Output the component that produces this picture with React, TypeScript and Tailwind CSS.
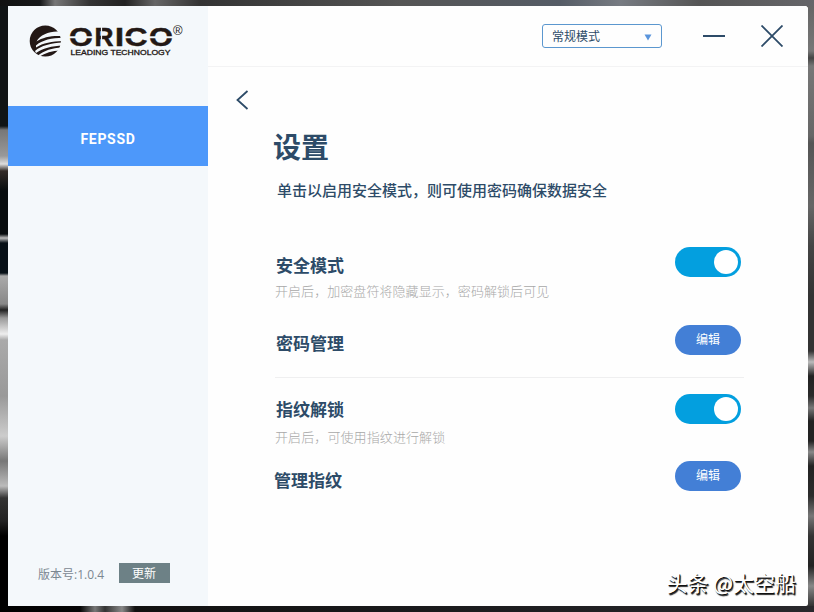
import { useState } from "react";
import clsx from "clsx";

const letters = [
  { char: "O", x: 41, width: 24 },
  { char: "R", x: 66.5, width: 19 },
  { char: "I", x: 87, width: 9 },
  { char: "C", x: 96.5, width: 23 },
  { char: "O", x: 121, width: 24 },
];

function Logo() {
  return (
    <svg width="160" height="34" viewBox="0 0 160 34" aria-label="ORICO">
      <circle cx="17.300" cy="17" r="15.600" fill="#231815" />
      {/* wing feathers */}
      <g fill="#f4f8fb">
        <path d="M8.500 17.500C12 11 21 7.200 30 7.500L34 6L35 12.200C25 11.300 15 13 8.500 17.500Z" />
        <path d="M8 21.500C14 16 24 14 35 13.800L35 17C24 17.200 15 19 8 23.500Z" />
        <path d="M7 27C13 21.500 23 19 35 18.500L35 21.500C24 21.800 14 24.500 8 29Z" />
        <path d="M10 31.500C16 26.500 24 24 34 23.500L32.500 26.500C24 26.800 17 29 11.500 32.500Z" />
      </g>
      {letters.map((letter, i) => (
        <text
          key={i}
          x={letter.x}
          y="22.400"
          fill="#231815"
          stroke="#231815"
          strokeWidth=".5"
          className="font-['Liberation_Sans'] text-[25px] font-bold"
          textLength={letter.width}
          lengthAdjust="spacingAndGlyphs"
        >
          {letter.char}
        </text>
      ))}
      {/* stencil gaps */}
      <path d="M40 13.300H51M55 13.300H67M96 13.300H107M120 13.300H131M135 13.300H147" stroke="#f4f8fb" strokeWidth="2" />
      <path d="M73.500 3V23.500" stroke="#f4f8fb" strokeWidth="1.200" />
      <text x="145" y="10.500" fill="#231815" className="font-['Liberation_Sans'] text-[13px]">
        ®
      </text>
      <text
        x="42.500"
        y="30.700"
        fill="#231815"
        stroke="#231815"
        strokeWidth=".3"
        className="font-['Liberation_Sans'] text-[7px]"
        textLength="100"
        lengthAdjust="spacingAndGlyphs"
      >
        LEADING TECHNOLOGY
      </text>
    </svg>
  );
}

function Toggle() {
  const [on, setOn] = useState(true);

  return (
    <button
      onClick={() => setOn(!on)}
      className={clsx(
        "flex h-[30px] w-[66px] items-center rounded-full px-[3px]",
        on ? "justify-end bg-[#039fdf]" : "justify-start bg-gray-300"
      )}
    >
      <span className="size-6 rounded-full bg-white" />
    </button>
  );
}

function EditButton() {
  return (
    <button className="h-[30px] w-[66px] rounded-full bg-[#437fd6] pb-0.5 text-xs text-white">编辑</button>
  );
}

export default function App() {
  return (
    <div className="h-[612px] w-[814px] overflow-hidden bg-[#161617] font-['Noto_Sans_CJK_SC',sans-serif]">
      {/* Desktop above the window */}
      <div className="h-1.5 bg-[linear-gradient(90deg,#111_0px,#17191a_40px,#777_55px,#333_90px,#222_125px,#666_155px,#333_200px,#555_400px,#555c66_560px,#777b82_620px,#555_700px,#66666a_814px)]" />

      <div className="flex h-[600px]">
        <div className="w-2 bg-[linear-gradient(180deg,#101415_0px,#101415_120px,#777_124px,#999_150px,#ddd_158px,#332c28_165px,#070c0e_185px,#070c0e_228px,#bbb_232px,#071017_237px,#071017_267px,#aaa_270px,#888_298px,#222_304px,#999_312px,#eee_328px,#aaa_334px,#999_390px,#ccc_430px,#777_455px,#bbb_480px,#333_492px,#222_515px,#000_530px)]" />

        <main className="flex w-[800px] overflow-hidden rounded-tr-[2px] rounded-br-[2px] bg-[#fefefe] text-[#2d4b68]">
          <aside className="flex w-[200px] flex-col bg-[#f4f8fb]">
            <div className="h-[100px] pt-[18px] pl-5">
              <Logo />
            </div>
            <div className="flex h-[60px] items-center justify-center bg-[#4d98fa] pt-1.5 font-['Roboto'] text-sm font-bold tracking-[0.7px] text-white">
              FEPSSD
            </div>
            <div className="mt-auto mb-[23px] flex items-center pl-[30px] text-xs text-[#7b8791]">
              <span className="w-[81px] pt-1 font-['Open_Sans','Noto_Sans_CJK_SC']">版本号:1.0.4</span>
              <button className="h-5 w-[51px] bg-[#6d8186] pr-px text-xs leading-5 text-white">更新</button>
            </div>
          </aside>

          <section className="flex w-[600px] flex-col">
            <header className="flex h-[61px] items-center justify-end border-b border-[#f3f3f4] pr-[25px]">
              <button className="flex h-6 w-[120px] items-center justify-between rounded-[3px] border border-[#5b97cf] pr-[9px] pl-[9px] text-xs">
                常规模式
                <svg className="mt-0.5" width="8" height="7" viewBox="0 0 8 7" fill="#5b95dc">
                  <path d="M.5 .5H7.500L4 6.500Z" />
                </svg>
              </button>
              <svg className="ml-[41px]" width="22" height="24" viewBox="0 0 22 24" stroke="#2d4b68" strokeWidth="2">
                <path d="M0 12H22" />
              </svg>
              <svg className="ml-[36px]" width="22" height="22" viewBox="0 0 22 22" stroke="#2d4b68" strokeWidth="1.800">
                <path d="M.5 .5L21.500 21.500M21.500 .5L.5 21.500" />
              </svg>
            </header>

            <div className="pt-[23px] pl-7">
              <svg width="13" height="20" viewBox="0 0 13 20" fill="none" stroke="#2d4b68" strokeWidth="1.800">
                <path d="M11.500 1L1.500 10L11.500 19" />
              </svg>
            </div>

            <h1 className="mt-4 pl-[65px] text-[28px] leading-10 font-bold">设置</h1>
            <p className="mt-[14px] pl-[69px] text-[15px] leading-5 font-medium">
              单击以启用安全模式，则可使用密码确保数据安全
            </p>

            <div className="mt-[47px] ml-[67px] w-[469px]">
              <div className="flex h-[78px] justify-between pr-[3px]">
                <div>
                  <h2 className="mt-1.5 pl-px text-[17px] leading-6 font-bold">安全模式</h2>
                  <p className="mt-1 text-[13px] leading-5 font-light tracking-[0.06px] text-[#a8a8a8]">
                    开启后，加密盘符将隐藏显示，密码解锁后可见
                  </p>
                </div>
                <Toggle />
              </div>
              <div className="flex h-[53px] justify-between border-b border-[#efeff0] pr-[3px]">
                <h2 className="mt-1.5 pl-px text-[17px] leading-6 font-bold">密码管理</h2>
                <EditButton />
              </div>
              <div className="mt-4 flex h-[67px] justify-between pr-[3px]">
                <div>
                  <h2 className="mt-[3px] pl-px text-[17px] leading-6 font-bold">指纹解锁</h2>
                  <p className="mt-1.5 text-[13px] leading-5 font-light tracking-[0.1px] text-[#a8a8a8]">
                    开启后，可使用指纹进行解锁
                  </p>
                </div>
                <Toggle />
              </div>
              <div className="flex justify-between pr-[3px]">
                <h2 className="mt-[7px] -ml-px text-[17px] leading-6 font-bold">管理指纹</h2>
                <EditButton />
              </div>
            </div>

            <div className="mt-auto mb-1.5 pr-3 text-right text-[21px] leading-9 text-white [text-shadow:1px_1px_0_#111,1.5px_1.5px_1px_#222]">
              头条 @太空船
            </div>
          </section>
        </main>

        <div className="w-1.5 bg-[linear-gradient(180deg,#666_0px,#777_45px,#444_52px,#777_60px,#666_130px,#555_137px,#666_200px,#444_240px,#333_290px,#333_345px,#bbb_356px,#222_370px,#2a2a2a_390px,#777_402px,#222_415px,#222_435px,#888_446px,#222_460px,#2c2c2c_490px,#777_510px,#333_530px,#222_560px,#888_580px,#333_600px)]" />
      </div>

      {/* Desktop below the window */}
      <div className="h-1.5 bg-[linear-gradient(90deg,#000_0px,#050505_80px,#777_95px,#333_105px,#888_122px,#111_135px,#19191b_400px,#29282c_814px)]" />
    </div>
  );
}
